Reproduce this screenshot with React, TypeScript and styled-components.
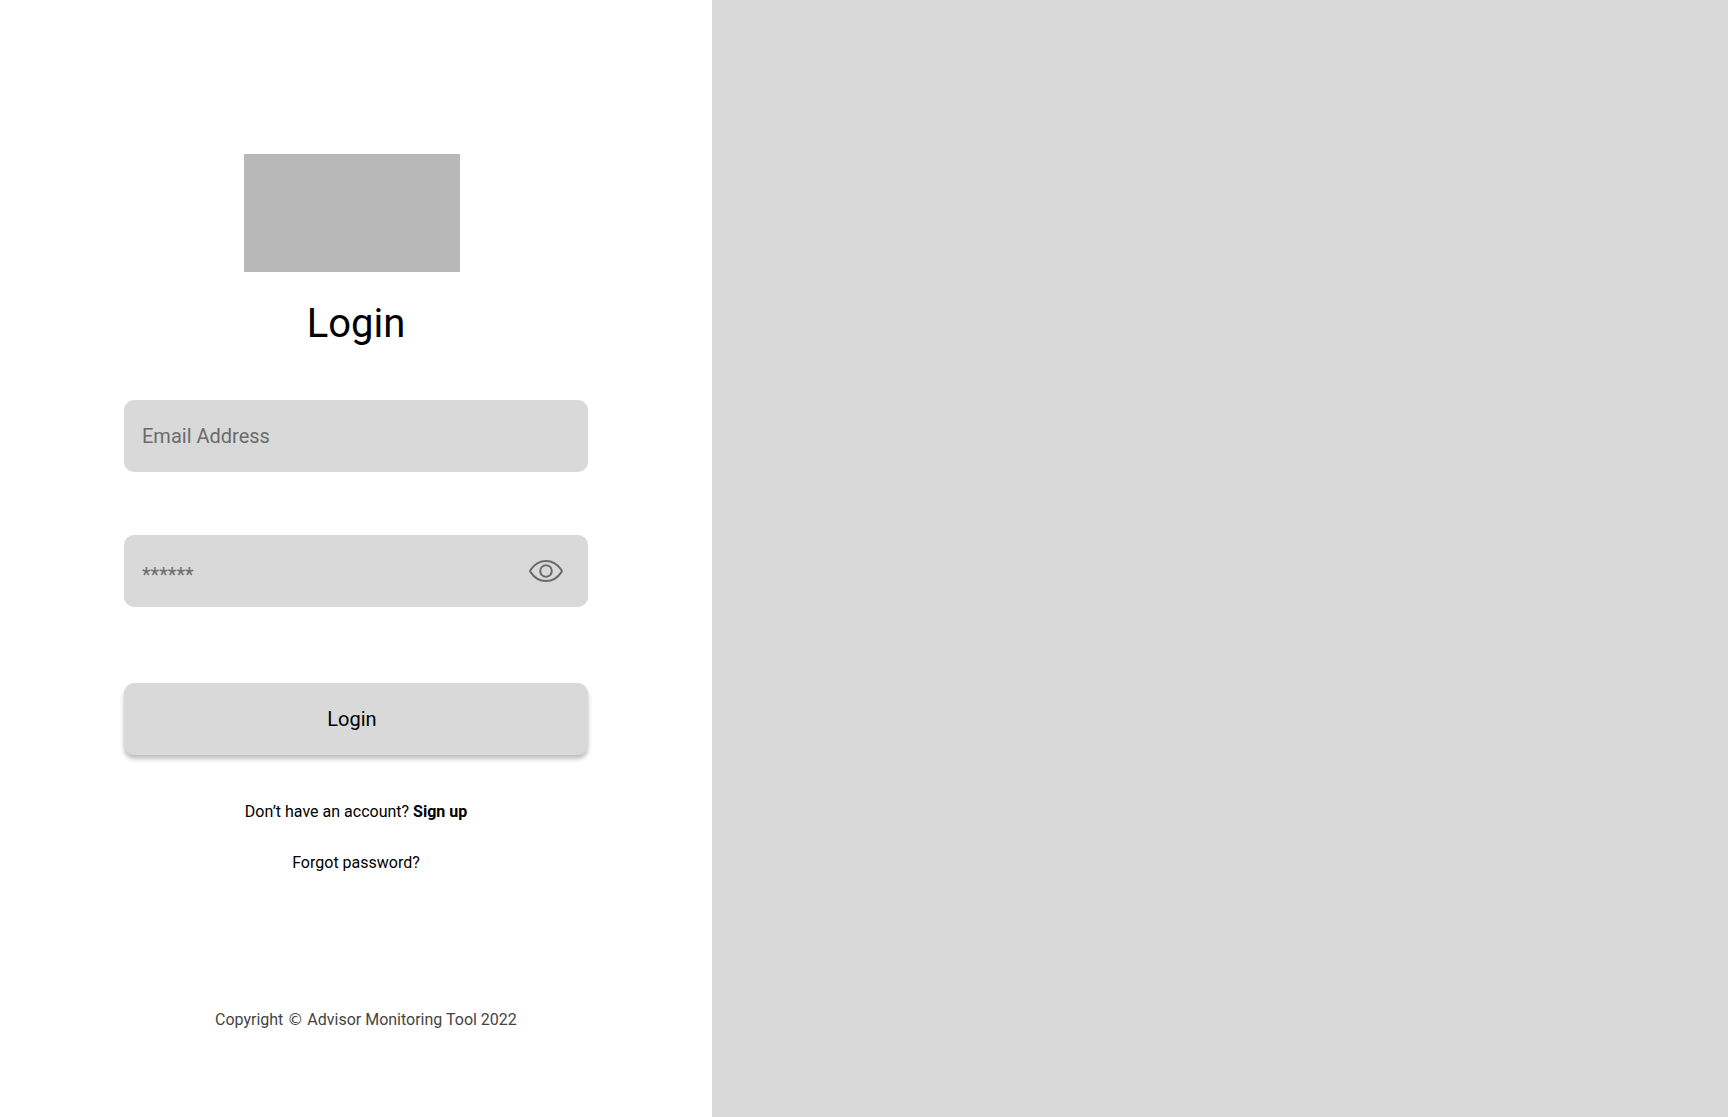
import React, { useState } from 'react';
import styled, { createGlobalStyle } from 'styled-components';

const GlobalStyle = createGlobalStyle`
  *, *::before, *::after { box-sizing: border-box; }
  body { margin: 0; background: #fff; color: #000; font-family: Roboto, "Liberation Sans", sans-serif; }
  input, button { font: inherit; color: inherit; }
`;

const Page = styled.main`
  display: grid;
  grid-template-columns: 89fr 127fr;
  min-height: 100vh;
`;

const Panel = styled.section`
  display: flex;
  flex-direction: column;
  align-items: center;
  padding: 154px 24px 64px;
`;

const Column = styled.div`
  display: flex;
  flex-direction: column;
  width: 100%;
  max-width: 464px;
`;

const Hero = styled.aside`
  background: #d9d9d9;
`;

const Logo = styled.div`
  width: 216px;
  height: 118px;
  margin-left: 120px;
  background: #b8b8b8;
`;

const Title = styled.h1`
  margin: 28px 0 53px;
  font-size: 40px;
  line-height: 47px;
  font-weight: 400;
  text-align: center;
`;

const Form = styled.form`
  display: flex;
  flex-direction: column;
`;

const Field = styled.div`
  display: flex;
  align-items: center;
  height: 72px;
  margin-bottom: 63px;
  padding: 0 24px 0 18px;
  border-radius: 10px;
  background: #d9d9d9;

  & + & { margin-bottom: 76px; }
`;

const Input = styled.input<{ $masked?: boolean }>`
  flex: 1;
  min-width: 0;
  height: 100%;
  padding: ${(p) => (p.$masked ? '8px 0 0' : '0')};
  border: 0;
  outline: 0;
  background: transparent;
  font-size: 20px;

  &::placeholder { color: #6b6b6b; opacity: 1; }
`;

const IconButton = styled.button`
  display: flex;
  padding: 0;
  border: 0;
  background: none;
  color: #6b6b6b;
  cursor: pointer;
`;

const SubmitButton = styled.button`
  height: 72px;
  padding: 0 8px 0 0;
  border: 0;
  border-radius: 10px;
  background: #d9d9d9;
  box-shadow: 0 4px 4px rgba(0, 0, 0, 0.25);
  font-size: 20px;
  cursor: pointer;
`;

const Links = styled.nav`
  display: flex;
  flex-direction: column;
  align-items: center;
  gap: 32px;
  margin-top: 47px;
  font-size: 16px;
  line-height: 19px;
`;

const Prompt = styled.p`
  margin: 0;
`;

const TextLink = styled.a<{ $strong?: boolean }>`
  color: inherit;
  font-weight: ${(p) => (p.$strong ? 700 : 400)};
  text-decoration: none;
`;

const Footer = styled.footer`
  margin: 138px 0 0 91px;
  color: #444;
  font-size: 16px;
  line-height: 19px;
`;

const Sign = styled.span`
  font-family: "DejaVu Sans", sans-serif;
  line-height: 1;
`;

const EyeIcon = () => (
  <svg width="36" height="24" viewBox="0 0 36 24" fill="none" stroke="currentColor" strokeWidth="2" strokeLinejoin="round" aria-hidden="true">
    <path d="M2.4 12.9Q1.7 12 2.4 11.1C6.2 5.3 11.4 1.9 18 1.9S29.8 5.3 33.6 11.1Q34.3 12 33.6 12.9C29.8 18.7 24.6 22.1 18 22.1S6.2 18.7 2.4 12.9Z" />
    <circle cx="18" cy="12" r="5.8" />
  </svg>
);

export default function App() {
  const [visible, setVisible] = useState(false);

  return (
    <>
      <GlobalStyle />
      <Page>
        <Panel>
          <Column>
            <Logo />
            <Title>Login</Title>
            <Form onSubmit={(e) => e.preventDefault()}>
              <Field>
                <Input type="email" aria-label="Email Address" placeholder="Email Address" />
              </Field>
              <Field>
                <Input type={visible ? 'text' : 'password'} aria-label="Password" placeholder="******" $masked />
                <IconButton type="button" aria-label="Show password" aria-pressed={visible} onClick={() => setVisible(!visible)}>
                  <EyeIcon />
                </IconButton>
              </Field>
              <SubmitButton type="submit">Login</SubmitButton>
            </Form>
            <Links>
              <Prompt>
                Don’t have an account? <TextLink href="#signup" $strong>Sign up</TextLink>
              </Prompt>
              <TextLink href="#forgot">Forgot password?</TextLink>
            </Links>
            <Footer>
              Copyright <Sign>©</Sign> Advisor Monitoring Tool 2022
            </Footer>
          </Column>
        </Panel>
        <Hero />
      </Page>
    </>
  );
}
